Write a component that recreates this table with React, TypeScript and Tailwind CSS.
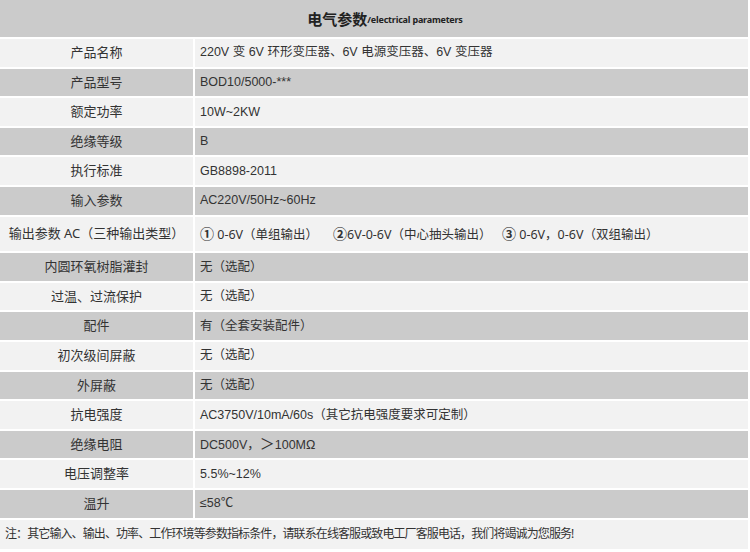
import React from "react";

type Row = { label: string; value: React.ReactNode; tall?: boolean };

const rows: Row[] = [
  { label: "产品名称", value: "220V 变 6V 环形变压器、6V 电源变压器、6V 变压器" },
  { label: "产品型号", value: "BOD10/5000-***" },
  { label: "额定功率", value: "10W~2KW" },
  { label: "绝缘等级", value: "B" },
  { label: "执行标准", value: "GB8898-2011" },
  { label: "输入参数", value: "AC220V/50Hz~60Hz" },
  {
    label: "输出参数 AC（三种输出类型）",
    tall: true,
    value: (
      <div className="flex items-center" style={{ fontFamily: '"Noto Sans", "Noto Sans CJK SC", sans-serif' }}>
        <span className="w-[133px]">
          <span className="font-bold text-[14px]">①</span> 0-6V（单组输出）
        </span>
        <span className="w-[169px]">
          <span className="font-bold text-[14px]">②</span>6V-0-6V（中心抽头输出）
        </span>
        <span>
          <span className="font-bold text-[14px]">③</span> 0-6V，0-6V（双组输出）
        </span>
      </div>
    )
  },
  { label: "内圆环氧树脂灌封", value: "无（选配）" },
  { label: "过温、过流保护", value: "无（选配）" },
  { label: "配件", value: "有（全套安装配件）" },
  { label: "初次级间屏蔽", value: "无（选配）" },
  { label: "外屏蔽", value: "无（选配）" },
  { label: "抗电强度", value: "AC3750V/10mA/60s（其它抗电强度要求可定制）" },
  {
    label: "绝缘电阻",
    value: (
      <span>
        DC500V，<span className="text-[15px]">＞</span>100MΩ
      </span>
    )
  },
  { label: "电压调整率", value: "5.5%~12%" },
  { label: "温升", value: "≤58℃" }
];

export default function App() {
  return (
    <div
      className="w-[750px] h-[552px] bg-white text-[#333333] text-[12px] overflow-hidden"
      style={{ fontFamily: '"Noto Sans", "Noto Sans CJK SC", sans-serif' }}
    >
      <div className="flex flex-col gap-[2px] pr-[2px]">
        <div className="h-[37px] bg-[#cbcbcb] flex items-center justify-center pl-[22px] pt-[2px]">
          <span className="text-[15px] font-bold text-[#222222]">电气参数</span>
          <span className="text-[9px] font-bold text-[#222222] tracking-[-0.2px]">
            /electrical parameters
          </span>
        </div>
        {rows.map((r, i) => {
          const bg = i % 2 === 0 ? "bg-[#f2f2f2]" : "bg-[#cbcbcb]";
          return (
            <div
              key={r.label}
              className={`flex gap-[2px] ${r.tall ? "h-[34.6px]" : "h-[27.6px]"}`}
            >
              <div
                className={`w-[193px] shrink-0 ${bg} flex items-center justify-center text-[13px]`}
              >
                {r.label}
              </div>
              <div
                className={`flex-1 ${bg} flex items-center pl-[5px] text-[12.5px]`}
                style={{ fontFamily: '"Liberation Sans", "Noto Sans CJK SC", sans-serif' }}
              >
                {r.value}
              </div>
            </div>
          );
        })}
        <div className="h-[29px] bg-[#f2f2f2] flex items-center pl-[5px] text-[12px] tracking-[-0.9px]">
          注：其它输入、输出、功率、工作环境等参数指标条件，请联系在线客服或致电工厂客服电话，我们将竭诚为您服务!
        </div>
      </div>
    </div>
  );
}
